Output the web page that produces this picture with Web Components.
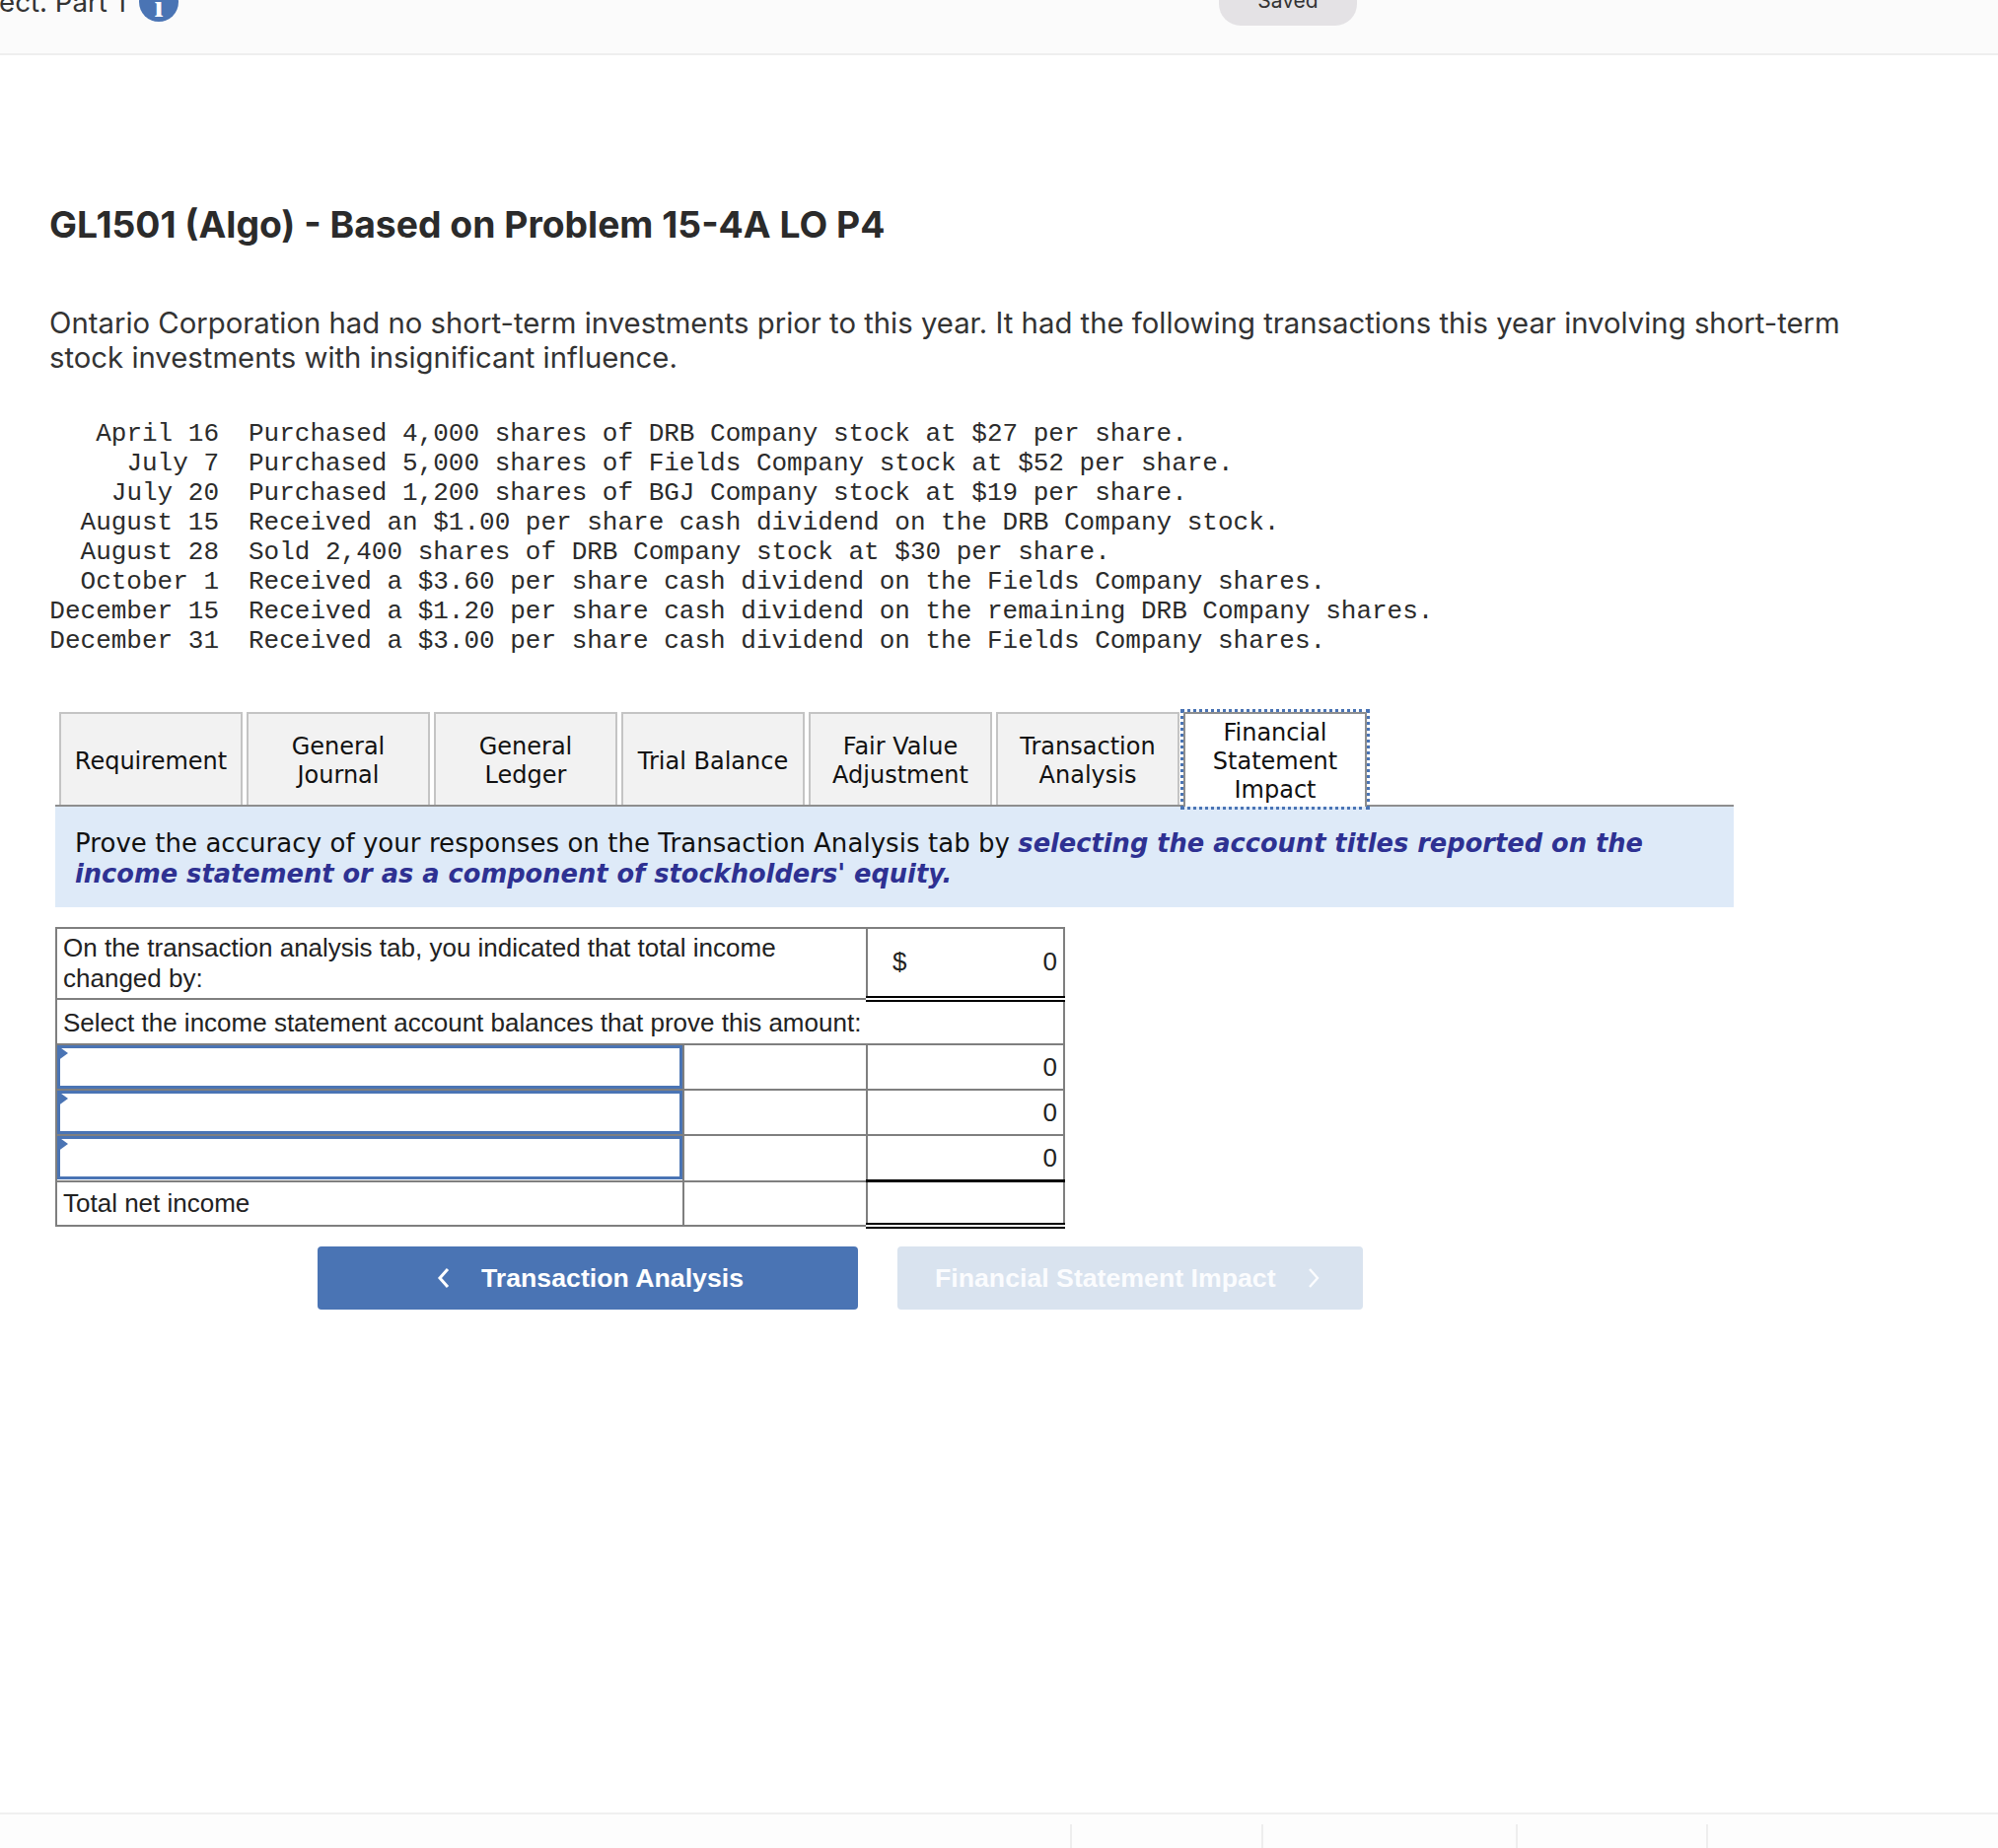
<!DOCTYPE html>
<html lang="en">
<head>
<meta charset="utf-8">
<title>GL1501 (Algo)</title>
<style>
    html, body { margin: 0; padding: 0; height: 100%; background: #fff; }
    body { display: flex; flex-direction: column; min-height: 1874px; overflow: hidden; }
</style>
</head>
<body>
<top-bar label="ect. Part 1" status="Saved"></top-bar>

<problem-intro heading="GL1501 (Algo) - Based on Problem 15-4A LO P4">
    Ontario Corporation had no short-term investments prior to this year. It had the following transactions this year involving short-term stock investments with insignificant influence.
</problem-intro>

<txn-list>
    <txn-row date="April 16">Purchased 4,000 shares of DRB Company stock at $27 per share.</txn-row>
    <txn-row date="July 7">Purchased 5,000 shares of Fields Company stock at $52 per share.</txn-row>
    <txn-row date="July 20">Purchased 1,200 shares of BGJ Company stock at $19 per share.</txn-row>
    <txn-row date="August 15">Received an $1.00 per share cash dividend on the DRB Company stock.</txn-row>
    <txn-row date="August 28">Sold 2,400 shares of DRB Company stock at $30 per share.</txn-row>
    <txn-row date="October 1">Received a $3.60 per share cash dividend on the Fields Company shares.</txn-row>
    <txn-row date="December 15">Received a $1.20 per share cash dividend on the remaining DRB Company shares.</txn-row>
    <txn-row date="December 31">Received a $3.00 per share cash dividend on the Fields Company shares.</txn-row>
</txn-list>

<tab-strip>
    <tab-item>Requirement</tab-item>
    <tab-item>General<br>Journal</tab-item>
    <tab-item>General<br>Ledger</tab-item>
    <tab-item>Trial Balance</tab-item>
    <tab-item>Fair Value<br>Adjustment</tab-item>
    <tab-item>Transaction<br>Analysis</tab-item>
    <tab-item active>Financial<br>Statement<br>Impact</tab-item>
</tab-strip>

<note-panel>
    Prove the accuracy of your responses on the Transaction Analysis tab by <b>selecting the account titles reported on the income statement or as a component of stockholders' equity.</b>
</note-panel>

<proof-table></proof-table>

<nav-row>
    <nav-button dir="prev">Transaction Analysis</nav-button>
    <nav-button dir="next" disabled>Financial Statement Impact</nav-button>
</nav-row>

<bottom-bar></bottom-bar>

<script>
// Barra superior (recortada por arriba en la captura)
class TopBar extends HTMLElement {
    constructor() {
        super();
        this.attachShadow({ mode: 'open' });
    }

    connectedCallback() {
        this.shadowRoot.innerHTML = `
            <style>
                :host {
                    display: block;
                    flex: none;
                    height: 54px;
                    background: #fbfbfb;
                    border-bottom: 2px solid #eeeeee;
                    overflow: hidden;
                }
                .inner {
                    display: flex;
                    align-items: flex-end;
                    height: 26px;
                }
                .label {
                    font: 27.7px/34px "Inter", sans-serif;
                    color: #333;
                    margin-bottom: 7px;
                    margin-left: -1px;
                    width: 142px;
                    white-space: nowrap;
                }
                .info {
                    flex: none;
                    width: 40px;
                    height: 40px;
                    margin: 0 0 4px 0;
                    border-radius: 50%;
                    background: #4a74b4;
                    color: #fff;
                    font: bold 32px/48px "Liberation Serif", serif;
                    text-align: center;
                    overflow: hidden;
                }
                .status {
                    flex: none;
                    width: 140px;
                    height: 60px;
                    margin-left: auto;
                    margin-right: 650px;
                    border-radius: 0 0 22px 22px;
                    background: #e4e2e5;
                    color: #333;
                    font: 21px/24px "Inter", sans-serif;
                    text-align: center;
                    display: flex;
                    align-items: flex-end;
                    justify-content: center;
                    padding-bottom: 13px;
                    box-sizing: border-box;
                }
            </style>
            <div class="inner">
                <span class="label">${this.getAttribute('label')}</span>
                <span class="info">i</span>
                <span class="status">${this.getAttribute('status')}</span>
            </div>
        `;
    }
}

class ProblemIntro extends HTMLElement {
    constructor() {
        super();
        this.attachShadow({ mode: 'open' });
    }

    connectedCallback() {
        this.shadowRoot.innerHTML = `
            <style>
                :host {
                    display: block;
                    flex: none;
                    padding: 0 50px;
                }
                h1 {
                    margin: 149px 0 0;
                    font: bold 37.3px/46px "Inter", sans-serif;
                    color: #2b2b2b;
                }
                p {
                    margin: 59px 0 0;
                    width: 1850px;
                    font: 29.3px/35px "Inter", sans-serif;
                    color: #333;
                }
            </style>
            <h1>${this.getAttribute('heading')}</h1>
            <p><slot></slot></p>
        `;
    }
}

class TxnList extends HTMLElement {
    constructor() {
        super();
        this.attachShadow({ mode: 'open' });
    }

    connectedCallback() {
        this.shadowRoot.innerHTML = `
            <style>
                :host {
                    display: block;
                    flex: none;
                    margin: 45px 0 0 50px;
                }
            </style>
            <slot></slot>
        `;
    }
}

class TxnRow extends HTMLElement {
    constructor() {
        super();
        this.attachShadow({ mode: 'open' });
    }

    connectedCallback() {
        this.shadowRoot.innerHTML = `
            <style>
                :host {
                    display: grid;
                    grid-template-columns: 172px 1fr;
                    column-gap: 30px;
                    font: 26px/30px "Liberation Mono", monospace;
                    color: #2b2b2b;
                }
                .date { text-align: right; white-space: nowrap; }
            </style>
            <span class="date">${this.getAttribute('date')}</span>
            <span><slot></slot></span>
        `;
    }
}

class TabStrip extends HTMLElement {
    constructor() {
        super();
        this.attachShadow({ mode: 'open' });
    }

    connectedCallback() {
        this.shadowRoot.innerHTML = `
            <style>
                :host {
                    display: flex;
                    flex: none;
                    gap: 4px;
                    box-sizing: border-box;
                    width: 1702px;
                    height: 96px;
                    margin: 57px 0 0 56px;
                    padding-left: 4px;
                    border-bottom: 2px solid #8e8e8e;
                }
            </style>
            <slot></slot>
        `;
    }
}

class TabItem extends HTMLElement {
    constructor() {
        super();
        this.attachShadow({ mode: 'open' });
    }

    connectedCallback() {
        this.shadowRoot.innerHTML = `
            <style>
                :host {
                    display: flex;
                    align-items: center;
                    justify-content: center;
                    box-sizing: border-box;
                    width: 186px;
                    height: 94px;
                    padding-top: 4px;
                    background: #f2f2f2;
                    border: 2px solid #c4c4c4;
                    border-bottom: 0;
                    font: 24px/29px "DejaVu Sans", sans-serif;
                    color: #111;
                    text-align: center;
                }
                :host([active]) {
                    position: relative;
                    height: 96px;
                    padding-top: 3px;
                    background: #fff;
                    border-color: #8e8e8e;
                    outline: 3px dotted #4a74b4;
                    outline-offset: 0;
                }
            </style>
            <span><slot></slot></span>
        `;
    }
}

class NotePanel extends HTMLElement {
    constructor() {
        super();
        this.attachShadow({ mode: 'open' });
    }

    connectedCallback() {
        this.shadowRoot.innerHTML = `
            <style>
                :host {
                    display: block;
                    flex: none;
                    box-sizing: border-box;
                    width: 1702px;
                    height: 102px;
                    margin-left: 56px;
                    padding: 22px 20px 0;
                    background: #deeaf8;
                    font: 26px/31px "DejaVu Sans", sans-serif;
                    letter-spacing: 0.055px;
                    color: #111;
                }
                ::slotted(b) {
                    font-style: italic;
                    font-weight: bold;
                    font-size: 25.7px;
                    letter-spacing: 0;
                    color: #2e3192;
                }
            </style>
            <slot></slot>
        `;
    }
}

// Tabla de comprobación del ingreso neto
class ProofTable extends HTMLElement {
    constructor() {
        super();
        this.attachShadow({ mode: 'open' });
    }

    inputRow() {
        return `
            <tr>
                <td class="pick"><div class="input"></div></td>
                <td></td>
                <td class="num">0</td>
            </tr>`;
    }

    connectedCallback() {
        this.shadowRoot.innerHTML = `
            <style>
                :host {
                    display: block;
                    flex: none;
                    margin: 20px 0 0 56px;
                    width: 1023px;
                }
                table {
                    border-collapse: collapse;
                    table-layout: fixed;
                    width: 1023px;
                    font: 26px/31px "Liberation Sans", Arial, sans-serif;
                    color: #222;
                }
                td {
                    border: 2px solid #7f7f7f;
                    padding: 0 6px;
                    height: 44px;
                    box-sizing: content-box;
                    white-space: nowrap;
                }
                td.wrap { white-space: normal; height: 70px; }
                td.short { height: 42px; }
                td.num { text-align: right; }
                td.pick { padding: 0; height: 44px; }
                td.money { position: relative; padding-bottom: 2px; }
                td.money span { float: left; margin-left: 19px; }
                td.dbl { border-bottom: 6px double #000; }
                td.top { border-top: 3px solid #000; }
                td.last { height: 41px; }
                .input {
                    position: relative;
                    box-sizing: border-box;
                    height: 44px;
                    margin: 0;
                    border: 3px solid #4a74b4;
                }
                .input::before {
                    content: "";
                    position: absolute;
                    left: -3px;
                    top: -3px;
                    border-left: 11px solid #4a74b4;
                    border-top: 8px solid transparent;
                    border-bottom: 8px solid transparent;
                }
            </style>
            <table>
                <colgroup>
                    <col style="width:636px">
                    <col style="width:186px">
                    <col style="width:200px">
                </colgroup>
                <tr>
                    <td class="wrap" colspan="2">On the transaction analysis tab, you indicated that total income changed by:</td>
                    <td class="money num dbl"><span>$</span>0</td>
                </tr>
                <tr><td class="short" colspan="3">Select the income statement account balances that prove this amount:</td></tr>
                ${this.inputRow()}
                ${this.inputRow()}
                ${this.inputRow()}
                <tr>
                    <td class="last">Total net income</td>
                    <td class="last"></td>
                    <td class="last dbl top"></td>
                </tr>
            </table>
        `;
    }
}

class NavRow extends HTMLElement {
    constructor() {
        super();
        this.attachShadow({ mode: 'open' });
    }

    connectedCallback() {
        this.shadowRoot.innerHTML = `
            <style>
                :host {
                    display: flex;
                    flex: none;
                    gap: 40px;
                    margin: 18px 0 0 322px;
                }
            </style>
            <slot></slot>
        `;
    }
}

class NavButton extends HTMLElement {
    constructor() {
        super();
        this.attachShadow({ mode: 'open' });
    }

    connectedCallback() {
        const prev = this.getAttribute('dir') === 'prev';
        const chevron = prev
            ? '<svg width="14" height="22" viewBox="0 0 14 22"><path d="M11 2 L3 11 L11 20" fill="none" stroke="currentColor" stroke-width="3"/></svg>'
            : '<svg width="14" height="22" viewBox="0 0 14 22"><path d="M3 2 L11 11 L3 20" fill="none" stroke="currentColor" stroke-width="2.4"/></svg>';
        this.shadowRoot.innerHTML = `
            <style>
                :host {
                    display: flex;
                    align-items: center;
                    box-sizing: border-box;
                    height: 64px;
                    width: 548px;
                    padding-left: 121px;
                    gap: 31px;
                    background: #4a74b4;
                    color: #fff;
                    border-radius: 4px;
                    font: bold 26.7px/32px "Liberation Sans", Arial, sans-serif;
                }
                :host([disabled]) {
                    width: 472px;
                    padding-left: 38px;
                    gap: 31px;
                    background: #d9e3ef;
                    color: #fbfcfe;
                }
                svg { flex: none; }
            </style>
            ${prev ? chevron : ''}
            <span><slot></slot></span>
            ${prev ? '' : chevron}
        `;
    }
}

class BottomBar extends HTMLElement {
    constructor() {
        super();
        this.attachShadow({ mode: 'open' });
    }

    connectedCallback() {
        this.shadowRoot.innerHTML = `
            <style>
                :host {
                    display: flex;
                    flex: none;
                    box-sizing: border-box;
                    height: 36px;
                    margin-top: auto;
                    padding: 10px 0 0 1085px;
                    background: #fdfdfd;
                    border-top: 2px solid #f0f0f0;
                }
                i { width: 2px; height: 24px; background: #eeeeee; }
                i:nth-of-type(1) { margin-right: 192px; }
                i:nth-of-type(2) { margin-right: 256px; }
                i:nth-of-type(3) { margin-right: 191px; }
            </style>
            <i></i><i></i><i></i><i></i>
        `;
    }
}

customElements.define('top-bar', TopBar);
customElements.define('problem-intro', ProblemIntro);
customElements.define('txn-list', TxnList);
customElements.define('txn-row', TxnRow);
customElements.define('tab-strip', TabStrip);
customElements.define('tab-item', TabItem);
customElements.define('note-panel', NotePanel);
customElements.define('proof-table', ProofTable);
customElements.define('nav-row', NavRow);
customElements.define('nav-button', NavButton);
customElements.define('bottom-bar', BottomBar);
</script>
</body>
</html>
